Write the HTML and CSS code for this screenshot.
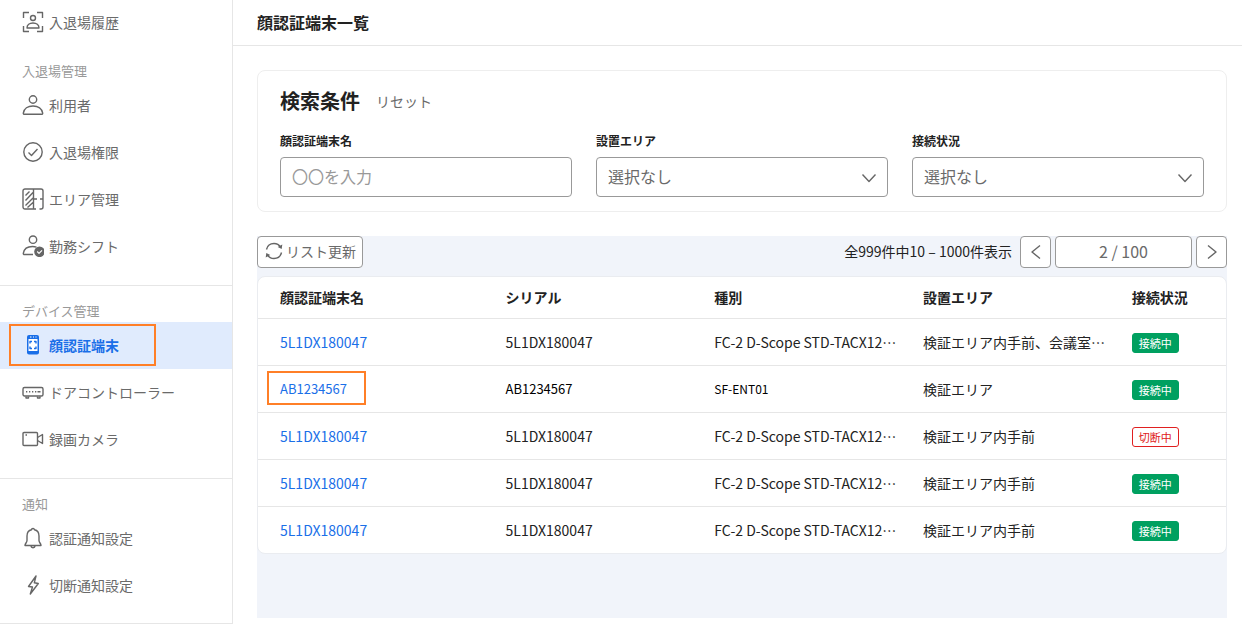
FILE: index.html
```
<!DOCTYPE html>
<html lang="ja">
<head>
    <meta charset="UTF-8">
    <meta name="viewport" content="width=device-width, initial-scale=1.0">
    <title>顔認証端末一覧</title>
    <link rel="stylesheet" href="styles.css">
</head>
<body>
    <nav class="sidebar">
        <div class="nav-group">
            <a href="#" class="nav-item">
                <svg class="icon" viewBox="0 0 22 22"><path d="M1.500 7V1.500H7M15 1.500h5.500V7M20.500 15v5.500H15M7 20.500H1.500V15"/><circle cx="11" cy="7" r="2.500"/><path d="M5 17c0-3 2.500-5 6-5s6 2 6 5z"/></svg>
                入退場履歴
            </a>
            <h2 class="nav-heading">入退場管理</h2>
            <a href="#" class="nav-item">
                <svg class="icon" viewBox="0 0 22 22"><circle cx="11" cy="5.500" r="3.700"/><path d="M2.500 20.300c-.9 0-1.300-.5-1.200-1.200C2 14.800 5.800 12 11 12s9 2.800 9.700 7.100c.1.700-.3 1.200-1.200 1.200z"/></svg>
                利用者
            </a>
            <a href="#" class="nav-item">
                <svg class="icon" viewBox="0 0 22 22"><circle cx="11" cy="11" r="9.200"/><path d="M6.500 11.500l3 3 6-6.500"/></svg>
                入退場権限
            </a>
            <a href="#" class="nav-item">
                <svg class="icon" viewBox="0 0 22 22"><path d="M14 21h-2M12 11h3M18 11h3M11.500 1v20H3a2 2 0 0 1-2-2V3a2 2 0 0 1 2-2h16a2 2 0 0 1 2 2v16a2 2 0 0 1-2 2h-1.500M3.500 7.500l4-4M3.500 12.500L11 4.500M3.500 17.500l7.500-7.500M5.500 19.500l5.500-5"/></svg>
                エリア管理
            </a>
            <a href="#" class="nav-item">
                <svg class="icon" viewBox="0 0 22 22"><circle cx="11" cy="4.700" r="3.700"/><path d="M11 19.500H2.500c-.9 0-1.300-.5-1.200-1.200C2 14 5.500 11.500 10.500 11.500c1.500 0 2.800.2 4 .6"/><circle class="solid" cx="17.500" cy="16.800" r="5.300"/><path class="knock" d="M15.200 16.500l1.800 1.800 3-3"/></svg>
                勤務シフト
            </a>
        </div>
        <div class="nav-group">
            <h2 class="nav-heading">デバイス管理</h2>
            <a href="#" class="nav-item active" aria-current="page">
                <svg class="icon" viewBox="0 0 22 22"><rect class="solid" x="5" y="1" width="12" height="19.500" rx="2"/><rect class="screen" x="6.500" y="5" width="9" height="12"/><path class="mark" d="M8 9.500V7.500h2M12 7.500h2v2M14 12.500v2h-2M10 14.500H8v-2"/><path class="knock" d="M8 3h1.500M11 3h1M13.500 3h1"/></svg>
                顔認証端末
                <span class="callout"></span>
            </a>
            <a href="#" class="nav-item">
                <svg class="icon" viewBox="0 0 22 22"><rect x="1" y="6.500" width="20" height="8.500" rx="1.500"/><path d="M4 15.500v1.500h2.500v-1.500M15.500 15.500v1.500H18v-1.500M4 10.700h1.300M7 10.700h1.300M10 10.700h1.300M13 10.700h1.300M15.500 10.700h3"/></svg>
                ドアコントローラー
            </a>
            <a href="#" class="nav-item">
                <svg class="icon" viewBox="0 0 22 22"><rect x="1" y="4.500" width="14.500" height="13" rx="1"/><path d="M15.500 9.500l5-3v9l-5-3M3.500 7h1.500"/></svg>
                録画カメラ
            </a>
        </div>
        <div class="nav-group">
            <h2 class="nav-heading">通知</h2>
            <a href="#" class="nav-item">
                <svg class="icon" viewBox="0 0 22 22"><path d="M11 1.500c-1 0-1.500.6-1.500 1.300C6.500 3.500 5 6 5 9v4.500c0 2-2 3-2 5h16c0-2-2-3-2-5V9c0-3-1.500-5.500-4.500-6.200 0-.7-.5-1.300-1.500-1.300zM8.800 18.700c.2 1.300 1 2 2.200 2s2-.7 2.200-2"/></svg>
                認証通知設定
            </a>
            <a href="#" class="nav-item">
                <svg class="icon" viewBox="0 0 22 22"><path d="M14 2L6.500 12.500l4 .5-2.200 7 8-10.500-4-.7z"/></svg>
                切断通知設定
            </a>
        </div>
    </nav>

    <div class="content">
        <header class="page-header">
            <h1>顔認証端末一覧</h1>
        </header>
        <main>
            <form class="search">
                <div class="search-head">
                    <h2>検索条件</h2>
                    <button type="reset" class="reset">リセット</button>
                </div>
                <div class="fields">
                    <div class="field">
                        <label for="name">顔認証端末名</label>
                        <input type="text" id="name" placeholder="〇〇を入力">
                    </div>
                    <div class="field">
                        <label for="area">設置エリア</label>
                        <div class="select">
                            <select id="area"><option>選択なし</option></select>
                            <svg viewBox="0 0 16 16"><path d="M1.500 4.500L8 11.500l6.500-7"/></svg>
                        </div>
                    </div>
                    <div class="field">
                        <label for="status">接続状況</label>
                        <div class="select">
                            <select id="status"><option>選択なし</option></select>
                            <svg viewBox="0 0 16 16"><path d="M1.500 4.500L8 11.500l6.500-7"/></svg>
                        </div>
                    </div>
                </div>
            </form>

            <section class="list">
                <div class="toolbar">
                    <button type="button" class="refresh">
                        <svg viewBox="0 0 18 18"><path d="M1.500 7.500C2.300 4 5.300 1.500 9 1.500c2.800 0 5.200 1.400 6.500 3.700M16.500 10.500c-.8 3.500-3.800 6-7.500 6-2.800 0-5.200-1.400-6.500-3.700"/><path class="solid" d="M17.300 2.500l-.6 4.500-4-2zM.7 15.500l.6-4.500 4 2z"/></svg>
                        リスト更新
                    </button>
                    <div class="pager">
                        <span class="count">全999件中10 – 1000件表示</span>
                        <button type="button" class="page-btn" aria-label="前へ"><svg viewBox="0 0 16 16"><path d="M12 1.500L4 8l8 6.500"/></svg></button>
                        <input type="text" class="page-no" value="2 / 100" aria-label="ページ">
                        <button type="button" class="page-btn" aria-label="次へ"><svg viewBox="0 0 16 16"><path d="M4 1.500L12 8l-8 6.500"/></svg></button>
                    </div>
                </div>
                <table>
                    <thead>
                        <tr>
                            <th class="col-name">顔認証端末名</th>
                            <th>シリアル</th>
                            <th>種別</th>
                            <th>設置エリア</th>
                            <th class="col-status">接続状況</th>
                        </tr>
                    </thead>
                    <tbody>
                        <tr>
                            <td><a href="#">5L1DX180047</a></td>
                            <td>5L1DX180047</td>
                            <td>FC-2 D-Scope STD-TACX12…</td>
                            <td>検証エリア内手前、会議室…</td>
                            <td><span class="badge on">接続中</span></td>
                        </tr>
                        <tr class="sample">
                            <td><a href="#">AB1234567</a><span class="callout"></span></td>
                            <td>AB1234567</td>
                            <td class="model">SF-ENT01</td>
                            <td class="area">検証エリア</td>
                            <td><span class="badge on">接続中</span></td>
                        </tr>
                        <tr>
                            <td><a href="#">5L1DX180047</a></td>
                            <td>5L1DX180047</td>
                            <td>FC-2 D-Scope STD-TACX12…</td>
                            <td>検証エリア内手前</td>
                            <td><span class="badge off">切断中</span></td>
                        </tr>
                        <tr>
                            <td><a href="#">5L1DX180047</a></td>
                            <td>5L1DX180047</td>
                            <td>FC-2 D-Scope STD-TACX12…</td>
                            <td>検証エリア内手前</td>
                            <td><span class="badge on">接続中</span></td>
                        </tr>
                        <tr>
                            <td><a href="#">5L1DX180047</a></td>
                            <td>5L1DX180047</td>
                            <td>FC-2 D-Scope STD-TACX12…</td>
                            <td>検証エリア内手前</td>
                            <td><span class="badge on">接続中</span></td>
                        </tr>
                    </tbody>
                </table>
            </section>
        </main>
    </div>
</body>
</html>
```
FILE: styles.css
```
:root {
    --primary: #1a6fe8;
    --primary-bg: #e0ebfd;
    --text: #222;
    --text-sub: #6a6a6a;
    --text-light: #999;
    --line: #e6e6e6;
    --border: #999;
    --list-bg: #f1f4fa;
    --callout: #ff7f27;
}

* {
    box-sizing: border-box;
    margin: 0;
    padding: 0;
}

body {
    display: flex;
    min-height: 100vh;
    background: #fff;
    color: var(--text);
    font-family: "Noto Sans CJK JP", sans-serif;
    font-size: 14px;
    line-height: 20px;
}

button,
input,
select {
    background: #fff;
    border: 1px solid var(--border);
    border-radius: 4px;
    color: var(--text-sub);
    font: inherit;
}

a {
    color: var(--primary);
    text-decoration: none;
}

svg {
    fill: none;
    stroke: #666;
    stroke-width: 1.4;
    stroke-linejoin: round;
}

svg .solid {
    fill: #666;
    stroke: none;
}

svg .knock {
    stroke: #fff;
    stroke-width: 1.2;
}

svg .screen {
    fill: #fff;
    stroke: none;
}

svg .mark {
    stroke: var(--primary);
}

.callout {
    position: absolute;
    border: 2px solid var(--callout);
    pointer-events: none;
}

/* sidebar */
.sidebar {
    flex: none;
    width: 233px;
    border-right: 1px solid var(--line);
}

.nav-group {
    padding-bottom: 15px;
    border-bottom: 1px solid var(--line);
}

.nav-group:last-child {
    padding-bottom: 14px;
}

.nav-heading {
    padding: 13px 22px 0;
    color: var(--text-light);
    font-size: 13px;
    font-weight: 400;
    line-height: 23px;
}

.nav-item {
    position: relative;
    display: flex;
    align-items: center;
    gap: 5px;
    height: 47px;
    padding: 0 0 2px 22px;
    color: var(--text-sub);
}

.nav-item:first-child {
    height: 46px;
}

.nav-item .icon {
    width: 22px;
    height: 22px;
}

.nav-item.active {
    background: var(--primary-bg);
    color: var(--primary);
    font-weight: 700;
}

.nav-item.active .solid {
    fill: var(--primary);
}

.nav-item .callout {
    left: 9px;
    top: 2px;
    width: 147px;
    height: 42px;
}

/* content */
.content {
    flex: 1;
    display: flex;
    flex-direction: column;
    min-width: 0;
}

.page-header {
    padding: 12px 24px 13px;
    border-bottom: 1px solid var(--line);
}

.page-header h1 {
    font-size: 16px;
    line-height: 20px;
}

main {
    flex: 1;
    display: flex;
    flex-direction: column;
    gap: 24px;
    padding: 24px 15px 6px 24px;
}

/* search */
.search {
    padding: 15px 22px 14px;
    border: 1px solid #eee;
    border-radius: 8px;
}

.search-head {
    display: flex;
    align-items: center;
    gap: 16px;
    margin-bottom: 15px;
}

.search-head h2 {
    font-size: 20px;
    line-height: 30px;
}

.reset {
    border: 0;
    font-size: 14px;
}

.fields {
    display: grid;
    grid-template-columns: repeat(3, 1fr);
    gap: 24px;
}

.field label {
    display: block;
    margin-bottom: 6px;
    font-size: 12px;
    font-weight: 700;
}

.field input,
.field select {
    display: block;
    width: 100%;
    height: 40px;
    padding: 0 11px 2px;
    font-size: 16px;
}

.field input::placeholder {
    color: var(--text-light);
}

.select {
    position: relative;
}

.select select {
    appearance: none;
}

.select svg {
    position: absolute;
    top: 13px;
    right: 11px;
    width: 16px;
    height: 16px;
    pointer-events: none;
}

/* list */
.list {
    flex: 1;
    background: var(--list-bg);
}

.toolbar {
    display: flex;
    justify-content: space-between;
    margin-bottom: 8px;
}

.refresh {
    display: flex;
    align-items: center;
    gap: 3px;
    height: 32px;
    padding: 0 6px 2px 7px;
}

.refresh svg {
    width: 18px;
    height: 18px;
}

.pager {
    display: flex;
    align-items: center;
    gap: 4px;
}

.count {
    margin-right: 4px;
    padding-bottom: 2px;
}

.page-btn {
    display: grid;
    place-items: center;
    width: 31px;
    height: 32px;
}

.page-btn svg {
    width: 16px;
    height: 16px;
}

.page-no {
    width: 137px;
    height: 32px;
    padding-bottom: 2px;
    font-size: 16px;
    text-align: center;
}

table {
    width: 100%;
    table-layout: fixed;
    background: #fff;
    border: 1px solid #eaecf0;
    border-radius: 8px;
    border-spacing: 0;
}

th,
td {
    height: 47px;
    padding-left: 22px;
    border-bottom: 1px solid var(--line);
    text-align: left;
    white-space: nowrap;
}

th {
    height: 42px;
    padding-bottom: 2px;
}

.col-name {
    width: 23.3%;
}

.col-status {
    width: 12%;
}

tbody tr:last-child td {
    height: 46px;
    border-bottom: 0;
}

td:first-child {
    position: relative;
}

td .callout {
    left: 9px;
    top: 5px;
    width: 99px;
    height: 34px;
}

.sample td {
    color: #000;
    font-size: 13px;
}

.sample .model {
    font-size: 12px;
}

.sample .area {
    color: var(--text);
    font-size: 14px;
}

.badge {
    display: inline-block;
    padding: 0 6px;
    border: 1px solid;
    border-radius: 3px;
    font-size: 11px;
    line-height: 18px;
    vertical-align: middle;
}

.badge.on {
    background: #00a060;
    border-color: #00a060;
    color: #fff;
}

.badge.off {
    background: #fff;
    border-color: #e02020;
    color: #e02020;
}
```
